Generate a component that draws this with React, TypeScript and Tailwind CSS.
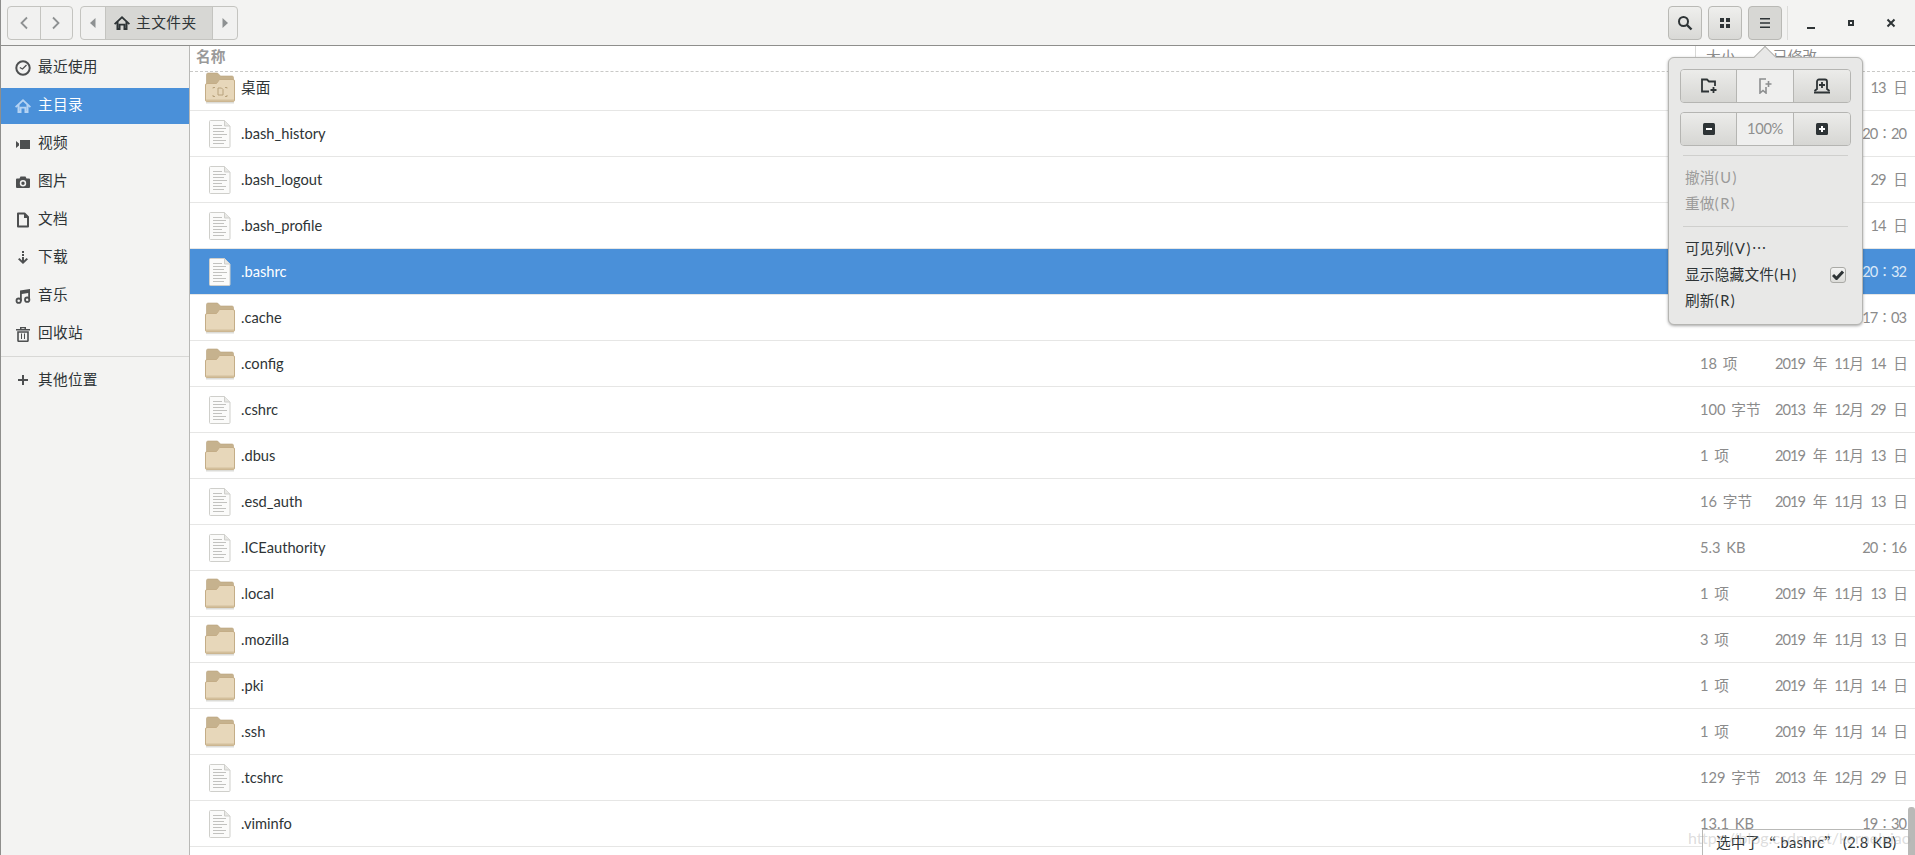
import React from 'react';

const FONT = "font-['Lato','Noto_Sans_CJK_SC',sans-serif]";

const FolderIcon = ({ desktop }: { desktop?: boolean }) => (
  <svg width="30" height="32" viewBox="0 0 30 32">
    <path d="M3 1h9.500l3 3H27a1.500 1.500 0 0 1 1.500 1.500V14h-27V2.500A1.500 1.500 0 0 1 3 1z" fill="#c6b28e" stroke="#b8a27c" strokeWidth="0.6" />
    <path d="M2 11.500h9.500l3-4H28a1.500 1.500 0 0 1 1.500 1.500V28a1.500 1.500 0 0 1-1.500 1.500H2A1.500 1.500 0 0 1 .5 28V13a1.500 1.500 0 0 1 1.500-1.500z" fill="#e7d7ba" stroke="#c4ad87" />
    <rect x="1" y="27.500" width="28" height="2" fill="#d3bf9b" />
    <rect x="1" y="30" width="28" height="1.500" fill="#dcdcd8" />
    {desktop && (
      <g fill="none" stroke="#b8a27c">
        <path d="M8 16.500v-1h2M20 15.500h2v1M22 23v1.500h-2M10 24.500H8V23" />
        <path d="M13 16h3.500l1.500 1.500V23h-5z" />
      </g>
    )}
  </svg>
);

const FileIcon = () => (
  <svg width="22" height="28" viewBox="0 0 22 28">
    <path d="M1.500.5h14l5.500 5.500v20.500a1 1 0 0 1-1 1h-18.500a1 1 0 0 1-1-1V1.500a1 1 0 0 1 1-1z" fill="#fbfbfa" stroke="#cfcfcb" />
    <path d="M15.500.5V6H21" fill="#e8e8e5" stroke="#cfcfcb" />
    <g stroke="#c2c2bf" strokeWidth="1">
      <path d="M4 5.500h9M4 8.500h13M4 11.500h11M4 14.500h14M4 17.500h9M4 20.500h13M4 23.500h11" />
    </g>
  </svg>
);

const Ico = ({ children, size = 16 }: { children: React.ReactNode; size?: number }) => (
  <svg width={size} height={size} viewBox="0 0 16 16" className="shrink-0" fill="currentColor">
    {children}
  </svg>
);

const ClockIcon = () => (
  <Ico>
    <circle cx="8" cy="8" r="6.700" fill="none" stroke="currentColor" strokeWidth="2" />
    <path d="M4.800 7.500l2.700 1.500L11.500 5" fill="none" stroke="currentColor" strokeWidth="1.300" />
  </Ico>
);
const HomeIcon = () => (
  <Ico>
    <path fillRule="evenodd" d="M8 1L0 8.500l1.200 1.300L2.500 8.600V15h4v-4.500h3V15h4V8.600l1.300 1.200L16 8.500zM4.500 13V6.800L8 3.600l3.500 3.200V13h-.2V8.700H4.700V13z" />
  </Ico>
);
const VideoIcon = () => (
  <Ico>
    <path d="M5 4h10v9H5zM1 5l3 2.500v2L1 12z" />
  </Ico>
);
const CameraIcon = () => (
  <Ico>
    <path fillRule="evenodd" d="M5.500 2.500h5L11.500 4.500H14a1 1 0 0 1 1 1v7.500a1 1 0 0 1-1 1H2a1 1 0 0 1-1-1V5.500a1 1 0 0 1 1-1h2.500zM8 6a3.200 3.200 0 1 0 0 6.400A3.200 3.200 0 0 0 8 6zm0 1.500a1.700 1.700 0 1 1 0 3.400 1.700 1.700 0 0 1 0-3.400z" />
  </Ico>
);
const DocIcon = () => (
  <Ico>
    <path d="M3 1.500h6.500L13 5v9.500H3z" fill="none" stroke="currentColor" strokeWidth="2" strokeLinejoin="round" />
    <path d="M9 1.500V6h4.500z" />
  </Ico>
);
const DownIcon = () => (
  <Ico>
    <path d="M7 1h2v2H7zM7 4h2v2H7zM7 7h2v3.500L11.500 8 13 9.300 8 14 3 9.300 4.500 8 7 10.500z" />
  </Ico>
);
const MusicIcon = () => (
  <Ico>
    <path d="M5 2.500L15 1v10.500h-1.800V5L6.800 6v7H5z" />
    <circle cx="3.700" cy="12.700" r="2.200" fill="none" stroke="currentColor" strokeWidth="1.800" />
    <circle cx="12.200" cy="11.700" r="2.200" fill="none" stroke="currentColor" strokeWidth="1.800" />
  </Ico>
);
const TrashIcon = () => (
  <Ico>
    <path d="M1 3h14v1.500H1zM5 1h6v2H9.500v-.7h-3V3H5z" />
    <path d="M3 6h10v8.500a.8.8 0 0 1-.8.800H3.800a.8.8 0 0 1-.8-.8z" fill="none" stroke="currentColor" strokeWidth="1.600" />
    <path d="M6 7.500h1V13H6zM9 7.500h1V13H9z" />
  </Ico>
);
const PlusIcon = () => (
  <Ico>
    <path d="M7 3h2v4h4v2H9v4H7V9H3V7h4z" />
  </Ico>
);

const SIDEBAR: { label: string; icon: React.ReactNode; active?: boolean }[] = [
  { label: '最近使用', icon: <ClockIcon /> },
  { label: '主目录', icon: <HomeIcon />, active: true },
  { label: '视频', icon: <VideoIcon /> },
  { label: '图片', icon: <CameraIcon /> },
  { label: '文档', icon: <DocIcon /> },
  { label: '下载', icon: <DownIcon /> },
  { label: '音乐', icon: <MusicIcon /> },
  { label: '回收站', icon: <TrashIcon /> },
];

type Row = { name: string; folder?: boolean; desktop?: boolean; size?: string; date: string; selected?: boolean };

const ROWS: Row[] = [
  { name: '桌面', folder: true, desktop: true, size: '0 项', date: '2019 年 11月 13 日' },
  { name: '.bash_history', size: '5.9 KB', date: '20∶20' },
  { name: '.bash_logout', size: '18 字节', date: '2013 年 12月 29 日' },
  { name: '.bash_profile', size: '193 字节', date: '2019 年 11月 14 日' },
  { name: '.bashrc', size: '2.8 KB', date: '20∶32', selected: true },
  { name: '.cache', folder: true, size: '9 项', date: '17∶03' },
  { name: '.config', folder: true, size: '18 项', date: '2019 年 11月 14 日' },
  { name: '.cshrc', size: '100 字节', date: '2013 年 12月 29 日' },
  { name: '.dbus', folder: true, size: '1 项', date: '2019 年 11月 13 日' },
  { name: '.esd_auth', size: '16 字节', date: '2019 年 11月 13 日' },
  { name: '.ICEauthority', size: '5.3 KB', date: '20∶16' },
  { name: '.local', folder: true, size: '1 项', date: '2019 年 11月 13 日' },
  { name: '.mozilla', folder: true, size: '3 项', date: '2019 年 11月 13 日' },
  { name: '.pki', folder: true, size: '1 项', date: '2019 年 11月 14 日' },
  { name: '.ssh', folder: true, size: '1 项', date: '2019 年 11月 14 日' },
  { name: '.tcshrc', size: '129 字节', date: '2013 年 12月 29 日' },
  { name: '.viminfo', size: '13.1 KB', date: '19∶30' },
];

const btn = 'flex items-center justify-center border border-[#b9b9b5] rounded-[4px] bg-linear-to-b from-[#efefed] to-[#d9d9d6] text-[#2e3436]';

const ToolButton = ({ children, active }: { children: React.ReactNode; active?: boolean }) => (
  <div className={active ? 'flex items-center justify-center w-[34px] h-[34px] border border-[#b9b9b5] rounded-[4px] bg-[#d7d7d4] text-[#2e3436]' : `${btn} w-[34px] h-[34px]`}>
    {children}
  </div>
);

const Toolbar = () => (
  <header className="flex items-center h-[46px] shrink-0 bg-[#f3f3f2] border-b border-l border-[#8e8e8c] pl-[6px] pr-[4px] text-[#2e3436]">
    <div className="flex h-[34px] w-[66px] border border-[#c4c4c0] rounded-[4px] bg-[#f1f1f0] text-[#8e9192]">
      <div className="flex flex-1 items-center justify-center border-r border-[#c4c4c0]">
        <svg width="10" height="14" viewBox="0 0 10 14" fill="none" stroke="currentColor" strokeWidth="1.800"><path d="M8 1.500L2.500 7 8 12.500" /></svg>
      </div>
      <div className="flex flex-1 items-center justify-center">
        <svg width="10" height="14" viewBox="0 0 10 14" fill="none" stroke="currentColor" strokeWidth="1.800"><path d="M2 1.500L7.500 7 2 12.500" /></svg>
      </div>
    </div>
    <div className="ml-[7px] flex h-[34px] w-[158px] border border-[#c4c4c0] rounded-[4px] bg-[#f1f1f0] overflow-hidden">
      <div className="flex w-[25px] items-center justify-center border-r border-[#c4c4c0] text-[#8e9192]">
        <svg width="6" height="10" viewBox="0 0 6 10" fill="currentColor"><path d="M5.500 0v10L0 5z" /></svg>
      </div>
      <div className="flex w-[107px] items-center pl-[8px] gap-[6px] bg-[#d7d7d4] border-r border-[#c4c4c0]">
        <HomeIcon />
        <span className="text-[14.67px] tracking-[0.5px]">主文件夹</span>
      </div>
      <div className="flex flex-1 items-center justify-center text-[#8e9192]">
        <svg width="6" height="10" viewBox="0 0 6 10" fill="currentColor"><path d="M.5 0v10L6 5z" /></svg>
      </div>
    </div>
    <div className="ml-auto flex items-center gap-[6px]">
      <ToolButton>
        <svg width="16" height="16" viewBox="0 0 16 16" fill="none" stroke="currentColor"><circle cx="6.500" cy="6.500" r="4.500" strokeWidth="2" /><path d="M10 10l4.500 4.500" strokeWidth="2.400" /></svg>
      </ToolButton>
      <ToolButton>
        <svg width="12" height="12" viewBox="0 0 12 12" fill="currentColor"><path d="M1 1h4v4H1zM7 1h4v4H7zM1 7h4v4H1zM7 7h4v4H7z" /></svg>
      </ToolButton>
      <ToolButton active>
        <svg width="12" height="12" viewBox="0 0 12 12" fill="currentColor"><path d="M1 1h10v1.500H1zM1 5.200h10v1.500H1zM1 9.500h10V11H1z" /></svg>
      </ToolButton>
    </div>
    <div className="ml-[5px] h-[34px] w-px bg-[#dcdcda]" />
    <div className="flex items-center">
      <div className="flex w-[40px] ml-[3px] justify-center"><div className="mt-[10px] h-[2px] w-[8px] bg-[#2e3436]" /></div>
      <div className="flex w-[40px] justify-center"><div className="h-[6px] w-[6px] border-2 border-[#2e3436]" /></div>
      <div className="flex w-[40px] justify-center">
        <svg width="10" height="10" viewBox="0 0 10 10" fill="none" stroke="#2e3436" strokeWidth="2"><path d="M1.500 1.500l7 7M8.500 1.500l-7 7" /></svg>
      </div>
    </div>
  </header>
);

const Sidebar = () => (
  <aside className="w-[190px] shrink-0 h-full bg-[#f3f3f2] border-l border-[#8e8e8c] border-r border-r-[#b9b9b7] pt-[4px] text-[14.67px] text-[#2e3436]">
    {SIDEBAR.map((s) => (
      <div key={s.label} className={`flex h-[36px] mb-[2px] items-center pl-[14px] gap-[7px] ${s.active ? 'bg-[#4a90d9] text-white' : ''}`}>
        <span className={s.active ? 'text-[#b5d3f3]' : 'text-[#4d4f50]'}>{s.icon}</span>
        <span className="-mt-[2px] tracking-[0.3px]">{s.label}</span>
      </div>
    ))}
    <div className="mt-[4px] h-px bg-[#d8d8d6]" />
    <div className="mt-[5px] flex h-[36px] items-center pl-[14px] gap-[7px]">
      <span className="text-[#4d4f50]"><PlusIcon /></span>
      <span className="tracking-[0.3px]">其他位置</span>
    </div>
  </aside>
);

const FileRow = ({ row }: { row: Row }) => (
  <div className={`flex h-[46px] shrink-0 items-center border-b border-[#e6e6e5] ${row.selected ? 'bg-[#4a90d9] text-white' : 'bg-white text-[#2e3436]'}`}>
    <div className="ml-[15px] mr-[6px] flex w-[30px] justify-center">
      {row.folder ? <FolderIcon desktop={row.desktop} /> : <FileIcon />}
    </div>
    <span className="flex-1 text-[14.67px]">{row.name}</span>
    <span className={`w-[75px] text-[14.67px] whitespace-nowrap [word-spacing:2px] ${row.selected ? 'text-white' : 'text-[#8b8b8b]'}`}>{row.size}</span>
    <span className={`w-[140px] pr-[9px] text-right text-[14.67px] whitespace-pre tracking-[-1px] [word-spacing:5px] ${row.selected ? 'text-[#dbe9f8]' : 'text-[#8b8b8b]'}`}>{row.date}</span>
  </div>
);

const MenuItem = ({ label, accel, disabled, children }: { label: string; accel: string; disabled?: boolean; children?: React.ReactNode }) => (
  <div className={`flex h-[26px] items-center justify-between pl-[5px] pr-[5px] text-[14.67px] ${disabled ? 'text-[#9b9b9a]' : 'text-[#2e3436]'}`}>
    <span className="tracking-[0.2px]">
      {label}
      <span className="tracking-[1.5px]">{accel}</span>
    </span>
    {children}
  </div>
);

const SegButton = ({ children, side }: { children: React.ReactNode; side: 'l' | 'r' | 'm' }) => {
  if (side === 'm') return <div className="flex w-[57px] items-center justify-center bg-[#efefee]">{children}</div>;
  return <div className="flex w-[57px] items-center justify-center bg-linear-to-b from-[#ececea] to-[#d6d6d3] text-[#2e3436]">{children}</div>;
};

const Popover = () => (
  <div className="absolute left-[1668px] top-[57px] w-[195px] h-[268px] rounded-[6px] border border-[#b5b5b2] bg-[#e8e8e7] p-[11px] shadow-[0_1px_3px_rgba(0,0,0,0.35)] z-10">
    <div className="absolute left-[88px] -top-[9px] h-[16px] w-[16px] rotate-45 border-l border-t border-[#b5b5b2] bg-[#e8e8e7]" />
    <div className="relative flex h-[34px] w-[171px] divide-x divide-[#b5b5b2] overflow-hidden rounded-[4px] border border-[#b5b5b2]">
      <SegButton side="l">
        <svg width="18" height="16" viewBox="0 0 18 16" fill="none" stroke="currentColor" strokeWidth="1.800"><path d="M9 13.500H2V1.500h5l2 2h6V8" /><path d="M13.500 9v6M10.500 12h6" strokeWidth="1.800" /></svg>
      </SegButton>
      <SegButton side="m">
        <svg width="14" height="16" viewBox="0 0 14 16" fill="none" stroke="#8c8e8f" strokeWidth="1.600"><path d="M8 1H2v14l3-2.500L8 15V9" /><path d="M10.500 3v6M7.500 6h6" /></svg>
      </SegButton>
      <SegButton side="r">
        <svg width="18" height="16" viewBox="0 0 18 16" fill="none" stroke="currentColor" strokeWidth="1.800"><path d="M1.500 13L4 11V3.500a2 2 0 0 1 2-2h6a2 2 0 0 1 2 2V11l2.500 2" /><path d="M1 14.500h16" /><path d="M9 4v6M6 7h6" /></svg>
      </SegButton>
    </div>
    <div className="relative mt-[9px] flex h-[34px] w-[171px] divide-x divide-[#b5b5b2] overflow-hidden rounded-[4px] border border-[#b5b5b2]">
      <SegButton side="l">
        <svg width="12" height="12" viewBox="0 0 12 12"><rect width="12" height="12" rx="1.500" fill="#2e3436" /><path d="M3 5h6v2H3z" fill="#fff" /></svg>
      </SegButton>
      <SegButton side="m">
        <span className="text-[14.67px] text-[#8f8f8f] tracking-[-0.3px]">100%</span>
      </SegButton>
      <SegButton side="r">
        <svg width="12" height="12" viewBox="0 0 12 12"><rect width="12" height="12" rx="1.500" fill="#2e3436" /><path d="M5 3h2v2h2v2H7v2H5V7H3V5h2z" fill="#fff" /></svg>
      </SegButton>
    </div>
    <div className="relative mx-[3px] mt-[9px] h-px bg-[#cfcfcd]" />
    <div className="mt-[9px]">
      <MenuItem label="撤消" accel="(U)" disabled />
      <MenuItem label="重做" accel="(R)" disabled />
    </div>
    <div className="mx-[3px] mt-[9px] h-px bg-[#cfcfcd]" />
    <div className="mt-[9px]">
      <MenuItem label="可见列" accel="(V)⋯" />
      <MenuItem label="显示隐藏文件" accel="(H)">
        <div className="flex h-[16px] w-[16px] items-center justify-center rounded-[3px] border border-[#aaaaa6] bg-linear-to-b from-[#f4f4f3] to-[#dcdcd9]">
          <svg width="12" height="10" viewBox="0 0 12 10" fill="none" stroke="#2e3436" strokeWidth="3"><path d="M1 5l3.500 3.500L11 1.500" /></svg>
        </div>
      </MenuItem>
      <MenuItem label="刷新" accel="(R)" />
    </div>
  </div>
);

const FileList = () => (
  <main className="relative flex-1 h-full overflow-hidden bg-white">
    <div className="absolute inset-x-0 top-0 z-[1] h-[26px] border-b border-dashed border-[#c9c9c7]">
      <div className="flex h-[18px] bg-white">
        <span className="pl-[6px] flex-1 text-[14.67px] font-bold text-[#9a9a9a] leading-[22px]">名称</span>
        <span className="mr-[4px] w-[16px] border-r border-[#d8d8d6]" />
        <span className="w-[73px] pl-[6px] text-[14.67px] text-[#8b8b8b] leading-[22px]">大小</span>
        <span className="w-[142px] text-[14.67px] text-[#8b8b8b] leading-[22px]">已修改</span>
      </div>
    </div>
    <div className="flex flex-col pt-[19px]">
      {ROWS.map((r) => (
        <FileRow key={r.name} row={r} />
      ))}
    </div>
  </main>
);

export default function App() {
  return (
    <div className={`relative flex h-[855px] w-[1915px] flex-col overflow-hidden bg-white ${FONT}`}>
      <Toolbar />
      <div className="flex flex-1 min-h-0">
        <Sidebar />
        <FileList />
      </div>
      <Popover />
      {/* floating status label and overlay scrollbar */}
      <div className="absolute bottom-0 left-[1702px] top-[829px] right-[7px] z-10 flex items-center border-l border-t border-[#b9b9b7] bg-white pl-[13px] text-[14.67px] text-[#2e3436] whitespace-pre">
        <span>选中了</span>
        <span className="font-['Noto_Sans_CJK_SC'] ml-[1px]">“</span>
        <span className="ml-[1px] tracking-[0.3px]">.bashrc</span>
        <span className="font-['Noto_Sans_CJK_SC']">”</span>
        <span className="ml-[4px] tracking-[0.3px]">(2.8 KB)</span>
      </div>
      <div className="absolute bottom-0 right-0 top-[807px] z-10 w-[7px] rounded-t-[3px] bg-[#b9b9b7]" />
      <div className="absolute left-[1688px] top-[826px] z-20 text-[16px] text-[#a8a8a8]/40 whitespace-nowrap">https://blog.csdn.net/kernelxiao</div>
    </div>
  );
}
